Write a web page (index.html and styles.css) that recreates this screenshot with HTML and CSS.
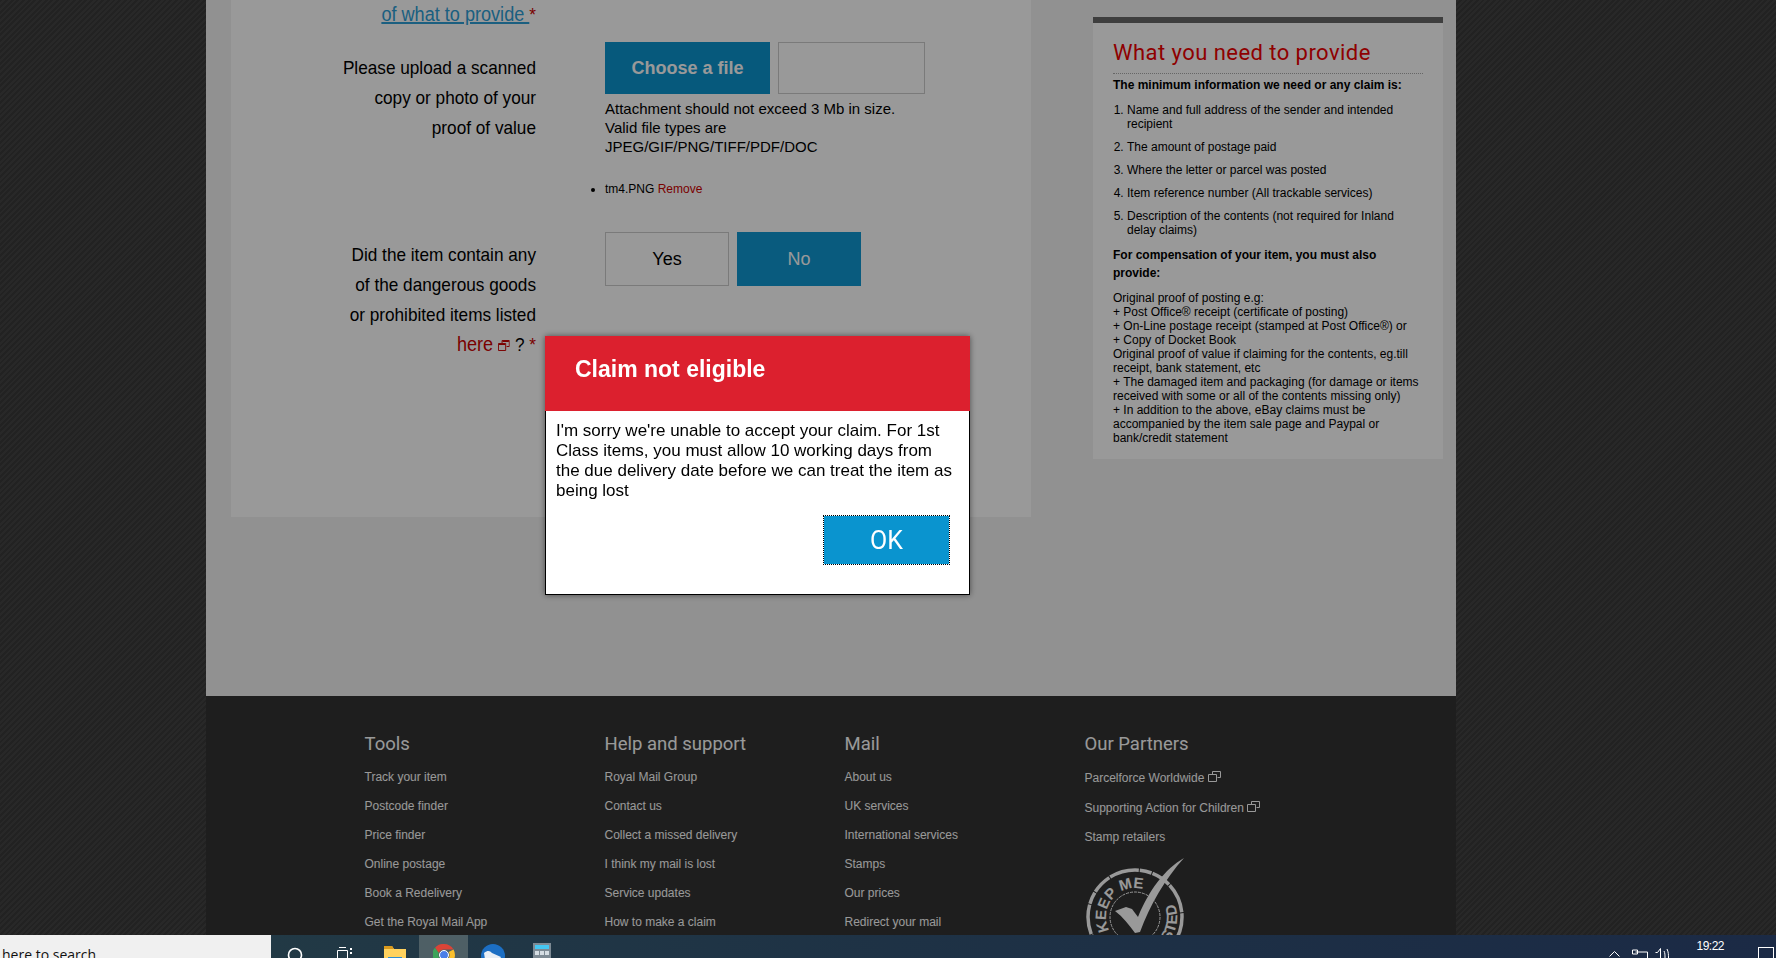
FILE: index.html
```html
<!DOCTYPE html>
<html lang="en">
<head>
    <meta charset="UTF-8">
    <meta name="viewport" content="width=device-width, initial-scale=1.0">
    <title>Claim not eligible</title>
    <link rel="stylesheet" href="styles.css">
</head>
<body>
    <div class="site">
        <div class="content">
            <div class="form-panel">
                <div class="form-row">
                    <div class="label"><a class="guide" href="#">of what to provide </a> <span class="req">*</span></div>
                    <div></div>
                </div>
                <div class="form-row row-upload">
                    <div class="label">Please upload a scanned<br>copy or photo of your<br>proof of value</div>
                    <div>
                        <div class="file-line">
                            <button class="choose">Choose a file</button>
                            <div class="file-name"></div>
                        </div>
                        <p class="hint">Attachment should not exceed 3 Mb in size.<br>Valid file types are<br>JPEG/GIF/PNG/TIFF/PDF/DOC</p>
                        <ul class="files">
                            <li>tm4.PNG <a class="remove" href="#">Remove</a></li>
                        </ul>
                    </div>
                </div>
                <div class="form-row row-goods">
                    <div class="label">Did the item contain any<br>of the dangerous goods<br>or prohibited items listed<br>
                        <a class="here" href="#">here
                            <svg class="ext" viewBox="0 0 13 11"><path d="M4.5 3.5V.5h8v6h-3M.5 3.5h8v7h-8z" fill="none" stroke="currentColor"/><path d="M1 4h7v1H1zM5 1h7v1H5z" fill="currentColor"/></svg>
                        </a> ? <span class="req">*</span>
                    </div>
                    <div class="yes-no">
                        <button class="yes">Yes</button>
                        <button class="no">No</button>
                    </div>
                </div>
            </div>

            <div class="side-box">
                <h3>What you need to provide</h3>
                <p class="lead">The minimum information we need or any claim is:</p>
                <ol>
                    <li>Name and full address of the sender and intended recipient</li>
                    <li>The amount of postage paid</li>
                    <li>Where the letter or parcel was posted</li>
                    <li>Item reference number (All trackable services)</li>
                    <li>Description of the contents (not required for Inland delay claims)</li>
                </ol>
                <p class="lead lead-two">For compensation of your item, you must also provide:</p>
                <p class="small">Original proof of posting e.g:<br>+ Post Office&reg; receipt (certificate of posting)<br>+ On-Line postage receipt (stamped at Post Office&reg;) or<br>+ Copy of Docket Book<br>Original proof of value if claiming for the contents, eg.till receipt, bank statement, etc<br>+ The damaged item and packaging (for damage or items received with some or all of the contents missing only)<br>+ In addition to the above, eBay claims must be accompanied by the item sale page and Paypal or bank/credit statement</p>
            </div>
        </div>

        <div class="footer">
            <div class="foot-col">
                <h4>Tools</h4>
                <a href="#">Track your item</a>
                <a href="#">Postcode finder</a>
                <a href="#">Price finder</a>
                <a href="#">Online postage</a>
                <a href="#">Book a Redelivery</a>
                <a href="#">Get the Royal Mail App</a>
            </div>
            <div class="foot-col">
                <h4>Help and support</h4>
                <a href="#">Royal Mail Group</a>
                <a href="#">Contact us</a>
                <a href="#">Collect a missed delivery</a>
                <a href="#">I think my mail is lost</a>
                <a href="#">Service updates</a>
                <a href="#">How to make a claim</a>
            </div>
            <div class="foot-col">
                <h4>Mail</h4>
                <a href="#">About us</a>
                <a href="#">UK services</a>
                <a href="#">International services</a>
                <a href="#">Stamps</a>
                <a href="#">Our prices</a>
                <a href="#">Redirect your mail</a>
            </div>
            <div class="foot-col partners">
                <h4>Our Partners</h4>
                <a class="pf" href="#">Parcelforce Worldwide <svg class="ext" viewBox="0 0 13 11"><path d="M4.5 3.5V.5h8v6h-3M.5 3.5h8v7h-8z" fill="none" stroke="currentColor"/></svg></a>
                <a class="pf" href="#">Supporting Action for Children <svg class="ext" viewBox="0 0 13 11"><path d="M4.5 3.5V.5h8v6h-3M.5 3.5h8v7h-8z" fill="none" stroke="currentColor"/></svg></a>
                <a href="#">Stamp retailers</a>
                <svg class="stamp" viewBox="0 0 100 100">
                    <defs>
                        <path id="arc-keep" d="M24.400 73.600A29 29 0 0 1 68.600 37.800"/>
                        <path id="arc-posted" d="M29 96.400A42 42 0 0 0 90 47"/>
                    </defs>
                    <circle cx="50" cy="60" r="47" fill="none" stroke="#fff" stroke-width="3.5" stroke-dasharray="30 1 12 1 20 1"/>
                    <circle cx="50" cy="60" r="25" fill="none" stroke="#fff" stroke-width="1" stroke-dasharray="3 1"/>
                    <text class="stamp-text"><textPath href="#arc-keep">KEEP ME</textPath></text>
                    <text class="stamp-text stamp-end"><textPath href="#arc-posted" startOffset="100%">POSTED</textPath></text>
                    <path d="M99 1C80 12 64 33 53 60L47 52L41 50L30 54C38 60 44 68 50 76L55 75C65 48 80 22 99 1Z" fill="#fff"/>
                </svg>
            </div>
        </div>
    </div>

    <!-- dark layer behind the dialog -->
    <div class="overlay"></div>

    <div class="dialog">
        <div class="dialog-head">Claim not eligible</div>
        <div class="dialog-body">
            <p>I'm sorry we're unable to accept your claim. For 1st Class items, you must allow 10 working days from the due delivery date before we can treat the item as being lost</p>
            <div class="dialog-actions"><button class="ok">OK</button></div>
        </div>
    </div>

    <div class="taskbar">
        <div class="search-box">here to search</div>
        <div class="tb-cell cell-search">
            <svg class="tb-search" viewBox="0 0 16 16"><circle cx="8" cy="8" r="6.5" fill="none" stroke="#fff" stroke-width="1.6"/></svg>
        </div>
        <div class="tb-cell cell-view">
            <svg class="tb-view" viewBox="0 0 16 12"><path d="M.5 3.5h10v8H.5zM2 .5h7" fill="none" stroke="#fff"/><path d="M13 1h2v2h-2zM13 5h2v2h-2z" fill="#fff"/></svg>
        </div>
        <div class="tb-cell cell-app">
            <svg class="tb-folder" viewBox="0 0 22 14"><path d="M0 0h8l2 3h12v11H0z" fill="#ffd25e"/><path d="M0 0h8l2 3H0z" fill="#d99a1d"/><path d="M4 11h14v3H4z" fill="#2e8dcf"/></svg>
        </div>
        <div class="tb-cell cell-app cell-active">
            <svg class="tb-round" viewBox="0 0 22 22">
                <path d="M11 0A11 11 0 0 1 20.5 5.5H11A5.5 5.5 0 0 0 5.8 9L2 3.8A11 11 0 0 1 11 0Z" fill="#db4437"/>
                <path d="M20.5 5.5A11 11 0 0 1 11 22L15.7 14A5.5 5.5 0 0 0 15.7 8Z" fill="#fbc02d"/>
                <path d="M2 3.8L5.8 9A5.5 5.5 0 0 0 11 16.500L11 22A11 11 0 0 1 2 3.8Z" fill="#3da35a"/>
                <circle cx="11" cy="11" r="4.500" fill="#4a7ee8" stroke="#fff"/>
            </svg>
        </div>
        <div class="tb-cell cell-app">
            <svg class="tb-round tb-bird" viewBox="0 0 24 22">
                <circle cx="12" cy="12" r="12" fill="#1c6fc4"/>
                <path d="M3 9C7 6 9 7 11 9L20 13L15 22H5Z" fill="#e8eef5"/>
            </svg>
        </div>
        <div class="tb-cell cell-app">
            <svg class="tb-calc" viewBox="0 0 18 15"><path d="M0 0h18v15H0z" fill="#7d8a94"/><path d="M2 2h14v4H2z" fill="#45c7f2"/><path d="M2 8h4v4H2zM7 8h4v4H7zM12 8h4v4h-4z" fill="#d5dde3"/></svg>
        </div>
        <div class="tray">
            <svg class="tr-caret" viewBox="0 0 11 6"><path d="M.5 5.500L5.500.5l5 5" fill="none" stroke="#fff"/></svg>
            <svg class="tr-net" viewBox="0 0 16 10"><path d="M3.500 2.500h12v8M.5.5h5v4h-5z" fill="none" stroke="#fff"/></svg>
            <svg class="tr-vol" viewBox="0 0 15 11"><path d="M.5 4.500h2l3-4v10M9 3c1 2 1 4 1 7M12 1c1.500 3 1.500 6 1.500 9" fill="none" stroke="#fff"/></svg>
            <div class="clock">19:22</div>
            <div class="notify"></div>
        </div>
    </div>
</body>
</html>
```

FILE: styles.css
```css
* {
    box-sizing: border-box;
}
body {
    margin: 0;
    height: 958px;
    overflow: hidden;
    font-family: "Liberation Sans", Arial, sans-serif;
    color: #000;
    background-color: #3c3c3c;
    background-image: repeating-linear-gradient(135deg, #3a3a3a 0, #3a3a3a 2px, #444 2px, #444 4px);
}
a {
    text-decoration: none;
}
button {
    border: 0;
    padding: 0;
    font-family: inherit;
}
.site {
    width: 1250px;
    margin-left: 206px;
}
.content {
    display: flex;
    height: 696px;
    background-color: #f2f2f2;
}

/* form */
.form-panel {
    width: 800px;
    height: 517px;
    margin-left: 25px;
    background-color: #fff;
}
.form-row {
    display: grid;
    grid-template-columns: 305px 1fr;
    column-gap: 69px;
}
/* no narrow font on the box, so squeeze the normal one */
.label {
    text-align: right;
    font-size: 19px;
    line-height: 30px;
    transform: scaleX(0.905);
    transform-origin: right center;
}
.row-upload {
    margin-top: 12px;
}
.row-upload .label {
    padding-top: 11px;
}
.guide {
    color: #2d9ed6;
    font-size: 20px;
    line-height: 1;
    text-decoration: underline;
}
.req {
    color: #c00;
}
.here {
    color: #c00;
    font-size: 20px;
    line-height: 1;
}
.remove {
    color: #c00;
}
.ext {
    display: inline-block;
    width: 13px;
    height: 11px;
}
.file-line {
    display: flex;
    gap: 8px;
}
.choose {
    width: 165px;
    height: 52px;
    background-color: #0a94cf;
    color: #fff;
    font-size: 18px;
    font-weight: bold;
}
.file-name {
    width: 147px;
    height: 52px;
    border: 1px solid #ccc;
    background-color: #fff;
}
.hint {
    margin: 5px 0 0;
    font-size: 15px;
    line-height: 19px;
}
.files {
    margin: 24px 0 0;
    padding: 0;
    font-size: 12px;
    line-height: 19px;
}
.row-goods {
    margin-top: 33px;
}
.row-goods .label {
    padding-top: 8px;
}
.yes-no {
    display: flex;
    gap: 8px;
}
.yes-no button {
    width: 124px;
    height: 54px;
    font-size: 18px;
}
.yes {
    background-color: #fff;
    border: 1px solid #ccc;
}
.no {
    background-color: #0f98d3;
    color: #fff;
}

/* what you need box */
.side-box {
    width: 350px;
    height: 442px;
    margin: 17px 0 0 62px;
    padding: 0 20px;
    background-color: #fff;
    border-top: 6px solid #686868;
}
.side-box h3 {
    margin: 14px 0 0;
    padding-bottom: 4px;
    border-bottom: 1px dotted #aaa;
    color: #e00;
    font-family: Roboto, sans-serif;
    font-size: 22px;
    font-weight: normal;
    letter-spacing: 0.45px;
    line-height: 32px;
}
.lead {
    margin: 2px 0 0;
    font-size: 12px;
    font-weight: bold;
    line-height: 18px;
}
.side-box ol {
    margin: 9px 0 0;
    padding: 0 0 0 14px;
    font-size: 12px;
    line-height: 14px;
}
.side-box li {
    margin-bottom: 9px;
}
.lead-two {
    margin-top: 7px;
}
.small {
    margin: 9px 0 0;
    font-size: 12px;
    line-height: 14px;
}

/* footer */
.footer {
    display: flex;
    height: 262px;
    padding: 32px 0 0 158.500px;
    background-color: #333;
    color: #fff;
}
.foot-col {
    width: 240px;
    display: flex;
    flex-direction: column;
}
.foot-col h4 {
    margin: 0 0 9px;
    font-family: Roboto, sans-serif;
    font-size: 18.500px;
    font-weight: normal;
    line-height: 32px;
}
.foot-col a {
    color: #fff;
    font-size: 12px;
    height: 29px;
    line-height: 17px;
}
.partners a.pf {
    height: 30px;
    padding-top: 1px;
}
.stamp {
    width: 100px;
    height: 100px;
    margin-top: -1px;
}
.stamp-text {
    fill: #fff;
    font-family: "Liberation Sans", sans-serif;
    font-size: 15px;
    font-weight: bold;
}
.stamp-end {
    text-anchor: end;
}

/* dialog */
.overlay {
    position: fixed;
    left: 0;
    top: 0;
    width: 100%;
    height: 100%;
    background-color: rgba(0, 0, 0, 0.4);
}
.dialog {
    position: fixed;
    left: 545px;
    top: 336px;
    width: 425px;
    height: 259px;
    background-color: #fff;
    border: 1px solid #000;
    border-top: 0;
    box-shadow: 0 0 6px rgba(0, 0, 0, 0.5);
}
.dialog-head {
    height: 75px;
    margin: 0 -1px;
    padding: 20px 0 0 30px;
    background-color: #dc202e;
    color: #fff;
    font-size: 23px;
    font-weight: bold;
    line-height: 26px;
}
.dialog-body {
    padding: 10px 11px 0 10px;
}
.dialog-body p {
    margin: 0;
    font-size: 17px;
    line-height: 20px;
}
.dialog-actions {
    display: flex;
    justify-content: flex-end;
    margin-top: 14px;
    padding-right: 8px;
}
.ok {
    width: 127px;
    height: 50px;
    background-color: #0a94cf;
    border: 1px solid #fff;
    color: #fff;
    font-family: Roboto, sans-serif;
    font-size: 25px;
    outline: 1px dotted #000;
    outline-offset: -1px;
}

/* windows taskbar */
.taskbar {
    position: fixed;
    left: 0;
    bottom: 0;
    width: 100%;
    height: 23px;
    display: flex;
    overflow: hidden;
    background: linear-gradient(to right, #233c45 0, #1e3245 50%, #1b2a45 100%);
}
.search-box {
    width: 271px;
    padding: 10px 0 0 2px;
    background-color: #f0f0f0;
    color: #111;
    font-family: "Open Sans", sans-serif;
    font-size: 14px;
    line-height: 20px;
}
.tb-cell {
    display: flex;
    justify-content: center;
    align-items: flex-start;
    flex-shrink: 0;
    height: 60px;
}
.cell-search {
    width: 48px;
}
.cell-view {
    width: 51px;
}
.cell-app {
    width: 49px;
}
.cell-active {
    background-color: #4e5f65;
}
.tb-search {
    width: 16px;
    height: 16px;
    margin-top: 12px;
}
.tb-view {
    width: 16px;
    height: 12px;
    margin-top: 12px;
}
.tb-folder {
    width: 22px;
    height: 14px;
    margin-top: 11px;
}
.tb-round {
    width: 22px;
    height: 22px;
    margin-top: 9px;
}
.tb-bird {
    width: 24px;
}
.tb-calc {
    width: 18px;
    height: 15px;
    margin-top: 8px;
}
.tray {
    display: flex;
    align-items: flex-start;
    margin-left: auto;
    padding-right: 2px;
}
.tr-caret {
    width: 11px;
    height: 6px;
    margin-top: 16px;
}
.tr-net {
    width: 16px;
    height: 11px;
    margin: 14px 0 0 12px;
}
.tr-vol {
    width: 15px;
    height: 11px;
    margin: 13px 0 0 7px;
}
.clock {
    margin: 3px 0 0 26px;
    color: #fff;
    font-size: 12px;
    letter-spacing: -0.5px;
    line-height: 16px;
}
.notify {
    width: 16px;
    height: 16px;
    margin: 12px 0 0 34px;
    border: 1px solid #fff;
}
```
